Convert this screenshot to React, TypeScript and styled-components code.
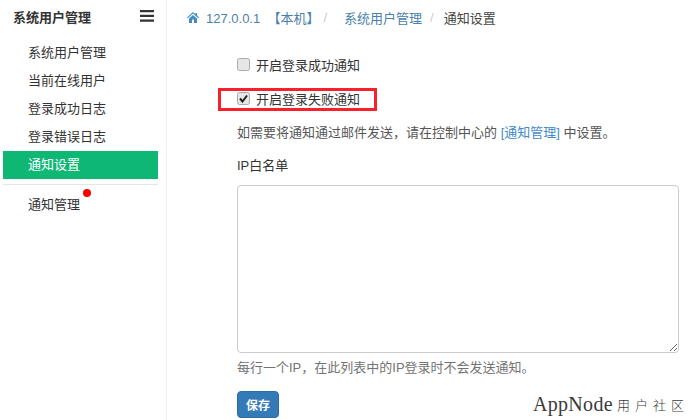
import React from 'react'
import styled, { createGlobalStyle } from 'styled-components'

const GlobalStyle = createGlobalStyle`
  html, body {
    margin: 0;
    padding: 0;
    background: #fff;
  }
  body {
    font-family: "Liberation Sans", "Noto Sans CJK SC", sans-serif;
    font-size: 13px;
    color: #333;
  }
`

const Page = styled.div`
  position: relative;
  display: flex;
  width: 688px;
  height: 420px;
  overflow: hidden;
`

const Sidebar = styled.div`
  width: 167px;
  height: 420px;
  flex: none;
  box-sizing: border-box;
  border-right: 1px solid #eee;
  padding-left: 3px;
`

const SideHeader = styled.div`
  display: flex;
  justify-content: space-between;
  align-items: center;
  width: 150px;
  height: 33px;
  padding-left: 10px;
  box-sizing: border-box;
  font-size: 13px;
  font-weight: 700;
  color: #333;
`

const Burger = styled.svg`
  width: 14px;
  height: 12px;
  margin-top: -1px;
  margin-right: -1px;
`

const Menu = styled.div`
  width: 155px;
  margin-top: 6px;
`

const MenuItem = styled.div<{ $active?: boolean; $low?: boolean }>`
  position: relative;
  height: 28px;
  line-height: ${(p) => (p.$low ? '32px' : '28px')};
  padding-left: 25px;
  font-size: 13px;
  color: ${(p) => (p.$active ? '#fff' : '#333')};
  background: ${(p) => (p.$active ? '#0fb775' : 'transparent')};
`

const Divider = styled.div`
  height: 1px;
  background: #e5e5e5;
  margin: 5px 0 4px;
`

const RedDot = styled.span`
  position: absolute;
  left: 80px;
  top: 0;
  width: 8px;
  height: 8px;
  border-radius: 50%;
  background: #f00;
`

const Main = styled.div`
  flex: 1;
  padding-left: 20px;
`

const Breadcrumb = styled.div`
  display: flex;
  align-items: center;
  height: 34px;
  font-size: 13px;
  color: #428bca;
`

const HomeIcon = styled.svg`
  width: 12px;
  height: 11px;
  margin-right: 7px;
`

const Crumb = styled.span<{ $current?: boolean }>`
  color: ${(p) => (p.$current ? '#444' : '#4a7fad')};
  white-space: pre;
`

const Sep = styled.span<{ $wide?: boolean }>`
  color: #ccc;
  margin: ${(p) => (p.$wide ? '0 17px 0 4px' : '0 10px 0 8px')};
`

const Form = styled.div`
  padding-left: 50px;
  padding-top: 13px;
  width: 442px;
`

const CheckRow = styled.label`
  display: flex;
  align-items: center;
  height: 34px;
  font-size: 13px;
  color: #333;
`

const Box = styled.span`
  width: 11px;
  height: 11px;
  border: 1px solid #aaa;
  border-radius: 2.5px;
  background: #e6e6e6;
  margin-right: 6px;
  display: flex;
  align-items: center;
  justify-content: center;
`

const Help = styled.p`
  margin: 8px 0 0;
  height: 20px;
  line-height: 20px;
  font-size: 13px;
  color: #555;
`

const Link = styled.span`
  color: #428bca;
`

const FieldLabel = styled.div`
  margin-top: 13px;
  height: 20px;
  line-height: 20px;
  font-size: 13px;
  color: #333;
`

const TextArea = styled.textarea`
  display: block;
  box-sizing: border-box;
  width: 442px;
  height: 168px;
  margin-top: 9px;
  border: 1px solid #ccc;
  border-radius: 4px;
  outline: none;
`

const Hint = styled.p`
  margin: 5px 0 0;
  height: 20px;
  line-height: 20px;
  font-size: 13px;
  color: #737373;
`

const SaveButton = styled.button`
  display: block;
  width: 42px;
  height: 27px;
  margin-top: 13px;
  padding: 0;
  border: 1px solid #2e6da4;
  border-radius: 4px;
  background: #337ab7;
  color: #fff;
  font: 700 12px "Liberation Sans", "Noto Sans CJK SC", sans-serif;
`

const RedMark = styled.div`
  position: absolute;
  left: 218px;
  top: 88px;
  width: 159px;
  height: 23px;
  box-sizing: border-box;
  border: 3px solid #f8202a;
`

const Watermark = styled.div`
  position: absolute;
  left: 533px;
  top: 392px;
  display: flex;
  align-items: center;
  height: 24px;
  color: #3a3a3a;
`

const WatermarkLatin = styled.span`
  font-family: "Liberation Serif", serif;
  font-size: 20px;
  letter-spacing: 0.3px;
`

const WatermarkCjk = styled.span`
  display: flex;
  gap: 5px;
  font-family: "Noto Sans CJK SC", sans-serif;
  font-size: 13px;
  font-weight: 300;
  margin-left: 4px;
`

const menu = ['系统用户管理', '当前在线用户', '登录成功日志', '登录错误日志']

export default function App() {
  return (
    <>
      <GlobalStyle />
      <Page>
        <Sidebar>
          <SideHeader>
            系统用户管理
            <Burger viewBox="0 0 14 12">
              <path d="M0 0h14v2.2H0zM0 4.8h14V7H0zM0 9.600h14v2.200H0z" fill="#333" />
            </Burger>
          </SideHeader>
          <Menu>
            {menu.map((m) => (
              <MenuItem key={m}>{m}</MenuItem>
            ))}
            <MenuItem $active>通知设置</MenuItem>
            <Divider />
            <MenuItem $low>
              通知管理
              <RedDot />
            </MenuItem>
          </Menu>
        </Sidebar>
        <Main>
          <Breadcrumb>
            <HomeIcon viewBox="0 0 12 11">
              <path d="M6 0L0 5.400l.7.800L6 1.600l5.300 4.600.7-.8-2-1.800V1H8.500v1.200zM2 6.400V11h3V7.600h2V11h3V6.400L6 2.900z" fill="#428bca" />
            </HomeIcon>
            <Crumb>127.0.0.1  【本机】</Crumb>
            <Sep $wide>/</Sep>
            <Crumb>系统用户管理</Crumb>
            <Sep>/</Sep>
            <Crumb $current>通知设置</Crumb>
          </Breadcrumb>
          <Form>
            <CheckRow>
              <Box />
              开启登录成功通知
            </CheckRow>
            <CheckRow>
              <Box>
                <svg width="9" height="9" viewBox="0 0 9 9">
                  <path d="M1 4.500L3.500 7.500L8 1.500" fill="none" stroke="#222" strokeWidth="2" />
                </svg>
              </Box>
              开启登录失败通知
            </CheckRow>
            <Help>
              如需要将通知通过邮件发送，请在控制中心的 <Link>[通知管理]</Link> 中设置。
            </Help>
            <FieldLabel>IP白名单</FieldLabel>
            <TextArea />
            <Hint>每行一个IP，在此列表中的IP登录时不会发送通知。</Hint>
            <SaveButton>保存</SaveButton>
          </Form>
        </Main>
        <RedMark />
        <Watermark>
          <WatermarkLatin>AppNode</WatermarkLatin>
          <WatermarkCjk>
            {'用户社区'.split('').map((c) => (
              <span key={c}>{c}</span>
            ))}
          </WatermarkCjk>
        </Watermark>
      </Page>
    </>
  )
}
